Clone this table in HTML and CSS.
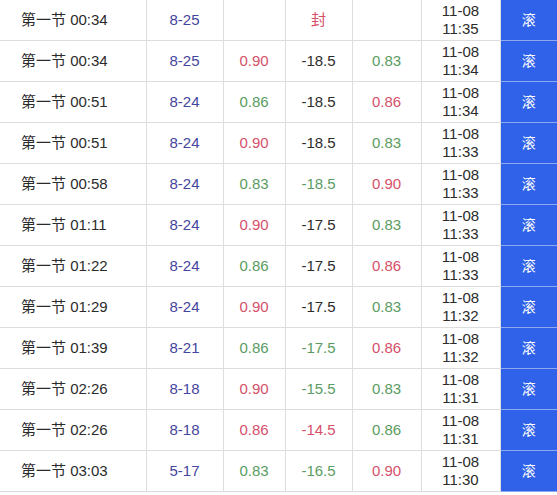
FILE: index.html
```
<!DOCTYPE html>
<html lang="zh-CN">
<head>
    <meta charset="UTF-8">
    <meta name="viewport" content="width=device-width, initial-scale=1.0">
    <title>滚球记录</title>
    <link rel="stylesheet" href="styles.css">
</head>
<body>
    <table class="odds-table">
        <colgroup>
            <col class="c-time">
            <col class="c-score">
            <col class="c-odd">
            <col class="c-line">
            <col class="c-odd2">
            <col class="c-date">
            <col class="c-type">
        </colgroup>
        <tbody>
            <tr>
                <td class="period">第一节 00:34</td>
                <td class="score">8-25</td>
                <td></td>
                <td class="red">封</td>
                <td></td>
                <td class="date">11-08<br>11:35</td>
                <td class="live">滚</td>
            </tr>
            <tr>
                <td class="period">第一节 00:34</td>
                <td class="score">8-25</td>
                <td class="red">0.90</td>
                <td>-18.5</td>
                <td class="green">0.83</td>
                <td class="date">11-08<br>11:34</td>
                <td class="live">滚</td>
            </tr>
            <tr>
                <td class="period">第一节 00:51</td>
                <td class="score">8-24</td>
                <td class="green">0.86</td>
                <td>-18.5</td>
                <td class="red">0.86</td>
                <td class="date">11-08<br>11:34</td>
                <td class="live">滚</td>
            </tr>
            <tr>
                <td class="period">第一节 00:51</td>
                <td class="score">8-24</td>
                <td class="red">0.90</td>
                <td>-18.5</td>
                <td class="green">0.83</td>
                <td class="date">11-08<br>11:33</td>
                <td class="live">滚</td>
            </tr>
            <tr>
                <td class="period">第一节 00:58</td>
                <td class="score">8-24</td>
                <td class="green">0.83</td>
                <td class="green">-18.5</td>
                <td class="red">0.90</td>
                <td class="date">11-08<br>11:33</td>
                <td class="live">滚</td>
            </tr>
            <tr>
                <td class="period">第一节 01:11</td>
                <td class="score">8-24</td>
                <td class="red">0.90</td>
                <td>-17.5</td>
                <td class="green">0.83</td>
                <td class="date">11-08<br>11:33</td>
                <td class="live">滚</td>
            </tr>
            <tr>
                <td class="period">第一节 01:22</td>
                <td class="score">8-24</td>
                <td class="green">0.86</td>
                <td>-17.5</td>
                <td class="red">0.86</td>
                <td class="date">11-08<br>11:33</td>
                <td class="live">滚</td>
            </tr>
            <tr>
                <td class="period">第一节 01:29</td>
                <td class="score">8-24</td>
                <td class="red">0.90</td>
                <td>-17.5</td>
                <td class="green">0.83</td>
                <td class="date">11-08<br>11:32</td>
                <td class="live">滚</td>
            </tr>
            <tr>
                <td class="period">第一节 01:39</td>
                <td class="score">8-21</td>
                <td class="green">0.86</td>
                <td class="green">-17.5</td>
                <td class="red">0.86</td>
                <td class="date">11-08<br>11:32</td>
                <td class="live">滚</td>
            </tr>
            <tr>
                <td class="period">第一节 02:26</td>
                <td class="score">8-18</td>
                <td class="red">0.90</td>
                <td class="green">-15.5</td>
                <td class="green">0.83</td>
                <td class="date">11-08<br>11:31</td>
                <td class="live">滚</td>
            </tr>
            <tr>
                <td class="period">第一节 02:26</td>
                <td class="score">8-18</td>
                <td class="red">0.86</td>
                <td class="red">-14.5</td>
                <td class="green">0.86</td>
                <td class="date">11-08<br>11:31</td>
                <td class="live">滚</td>
            </tr>
            <tr>
                <td class="period">第一节 03:03</td>
                <td class="score">5-17</td>
                <td class="green">0.83</td>
                <td class="green">-16.5</td>
                <td class="red">0.90</td>
                <td class="date">11-08<br>11:30</td>
                <td class="live">滚</td>
            </tr>
        </tbody>
    </table>
</body>
</html>
```

FILE: styles.css
```
body {
    margin: 0;
    background: #fff;
    font-family: "Liberation Sans", Arial, "Noto Sans CJK SC", sans-serif;
}
.odds-table {
    width: 557px;
    border-collapse: collapse;
    table-layout: fixed;
    font-size: 15px;
    color: #2b2b2b;
}
.c-time { width: 146px; }
.c-score { width: 77px; }
.c-odd { width: 62px; }
.c-line { width: 67px; }
.c-odd2 { width: 69px; }
.c-date { width: 79px; }
.c-type { width: 57px; }
.odds-table td {
    height: 40px;
    padding: 0;
    text-align: center;
    vertical-align: middle;
    border: 1px solid #dddddd;
    line-height: 18px;
}
.odds-table tr:first-child td { border-top: none; }
.odds-table td:first-child { border-left: none; }
.odds-table td.period {
    text-align: left;
    padding-left: 21px;
}
.score { color: #45459e; }
.red { color: #d6506a; }
.green { color: #5a9c62; }
.odds-table td.live {
    background: #2f62e8;
    color: #fff;
    font-size: 14px;
    border-right: none;
    border-top: 1px solid #8ea8ef;
    border-bottom: 1px solid #8ea8ef;
}
```
